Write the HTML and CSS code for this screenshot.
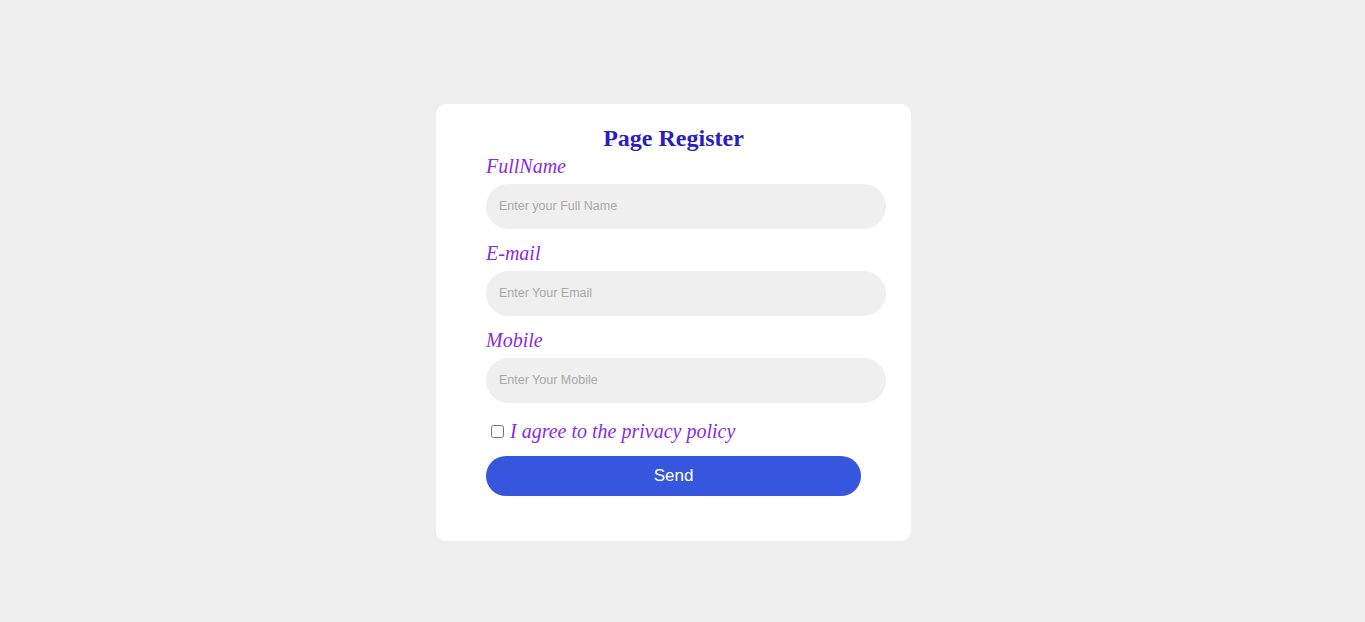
FILE: index.html
```html
<!DOCTYPE html>
<html lang="en">
<head>
<meta charset="UTF-8">
<title>Page Register</title>
<meta name="viewport" content="width=device-width, initial-scale=1.0">
<link rel="stylesheet" href="styles.css">
</head>
<body>

<div class="card">
  <h2 class="title">Page Register</h2>

  <form class="form" onsubmit="return false">
    <label class="label" for="fullname">FullName</label>
    <input class="field" id="fullname" placeholder="Enter your Full Name">

    <label class="label" for="email">E-mail</label>
    <input class="field" id="email" placeholder="Enter Your Email">

    <label class="label" for="mobile">Mobile</label>
    <input class="field" id="mobile" placeholder="Enter Your Mobile">

    <div class="agree">
      <input type="checkbox" id="policy">
      <label for="policy">I agree to the privacy policy</label>
    </div>

    <button class="send" type="submit">Send</button>
  </form>
</div>

</body>
</html>
```

FILE: styles.css
```css
:root{
  --bg:#eeeeee;
  --title:#2b1dc3;
  --label:#8a2be2;
  --field:#efefef;
  --btn:#3657dd;
}
*{box-sizing:border-box}
body{
  margin:11px 26px 8px 8px; /* room for the scrollbar */
  height:100vh;
  background:var(--bg);
  font-family:"Liberation Serif", "Times New Roman", serif;
  display:flex;
  justify-content:center;
  align-items:center;
}

/* CARD */
.card{
  width:475px;
  background:#fff;
  border-radius:10px;
  padding:0 50px 45px;
}
.title{
  margin:20px 0 0;
  font-size:24px;
  line-height:28px;
  text-align:center;
  color:var(--title);
}

/* FORM */
.form{
  display:flex;
  flex-direction:column;
  align-items:flex-start;
  padding-top:3px;
}
.label{
  font-size:20px;
  line-height:23px;
  font-style:italic;
  color:var(--label);
}
.field{
  width:400px;
  height:45px;
  margin:6px 0 13px;
  padding:0 13px;
  border:none;
  border-radius:25px;
  background:var(--field);
  font-family:"Liberation Sans", Arial, sans-serif;
  font-size:12.5px;
  outline:none;
}
.field::placeholder{color:#a9a9a9}

.agree{
  display:flex;
  align-items:center;
  margin-top:4px;
  font-size:20px;
  line-height:23px;
  font-style:italic;
  color:var(--label);
}
.agree input{
  width:13px;
  height:13px;
  margin:0 6px 0 5px;
}
.send{
  width:375px;
  height:40px;
  margin-top:13px;
  border:none;
  border-radius:20px;
  background:var(--btn);
  color:#fff;
  font-family:"Liberation Sans", Arial, sans-serif;
  font-size:17px;
}
```
